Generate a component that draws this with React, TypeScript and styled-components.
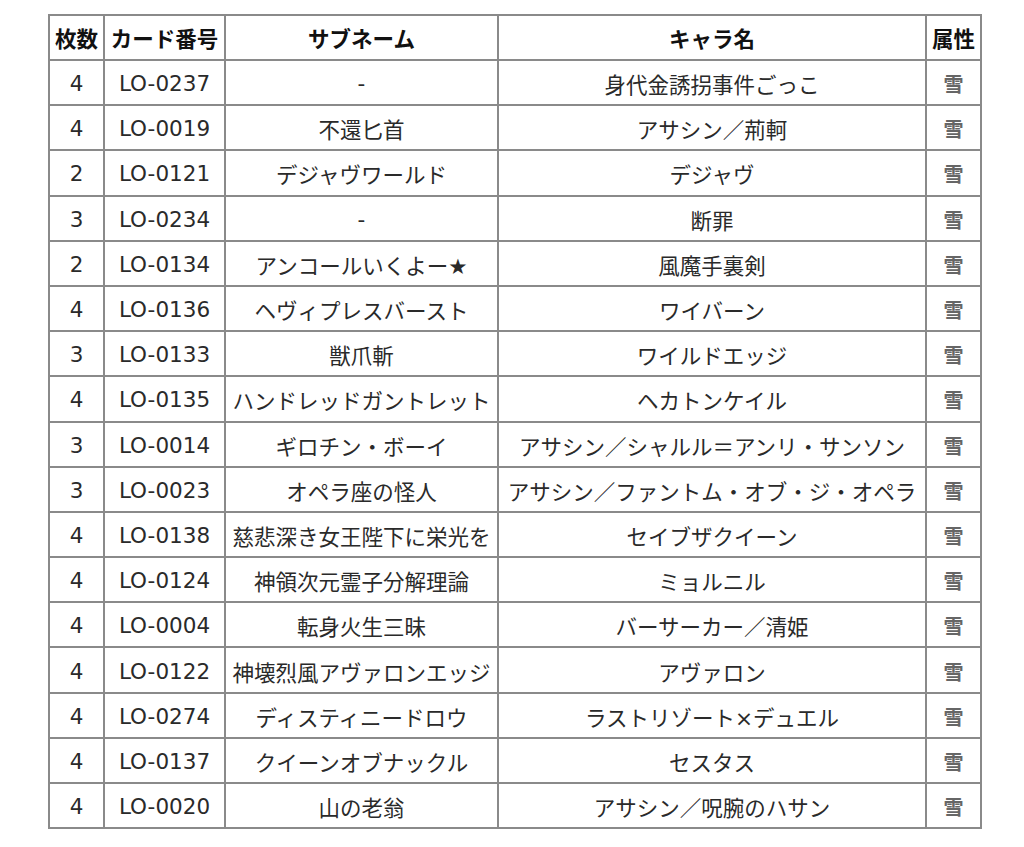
import styled, { createGlobalStyle } from "styled-components";

const GlobalStyle = createGlobalStyle`
	html, body {
		margin: 0;
		padding: 0;
		background: #fff;
	}
`;

const PageWrap = styled.div`
	padding: 14px 0 0 48px;
	font-family: "DejaVu Sans", "Noto Sans CJK JP", sans-serif;
	color: #2a2a2a;
`;

const CardTable = styled.table`
	width: 932px;
	table-layout: fixed;
	border-collapse: collapse;
	border: 2px solid #8a8a8a;
	font-size: 21.5px;
`;

const HeadCell = styled.th`
	height: 43px;
	padding: 0;
	border: 2px solid #8a8a8a;
	font-weight: 700;
	text-align: center;
	white-space: nowrap;
	color: #111;
`;

const Cell = styled.td<{ $attr?: boolean }>`
	height: 41.2px;
	padding: 2px 0 0;
	border: 2px solid #8a8a8a;
	text-align: center;
	white-space: nowrap;
	overflow: hidden;
	color: ${(p) => (p.$attr ? "#666" : "#2a2a2a")};
	font-size: ${(p) => (p.$attr ? "20px" : "inherit")};
	font-weight: ${(p) => (p.$attr ? 700 : 400)};
`;

type Card = {
	count: number;
	no: string;
	sub: string;
	chara: string;
};

const cards: Card[] = [
	{ count: 4, no: "LO-0237", sub: "-", chara: "身代金誘拐事件ごっこ" },
	{ count: 4, no: "LO-0019", sub: "不還匕首", chara: "アサシン／荊軻" },
	{ count: 2, no: "LO-0121", sub: "デジャヴワールド", chara: "デジャヴ" },
	{ count: 3, no: "LO-0234", sub: "-", chara: "断罪" },
	{ count: 2, no: "LO-0134", sub: "アンコールいくよー★", chara: "風魔手裏剣" },
	{ count: 4, no: "LO-0136", sub: "ヘヴィプレスバースト", chara: "ワイバーン" },
	{ count: 3, no: "LO-0133", sub: "獣爪斬", chara: "ワイルドエッジ" },
	{ count: 4, no: "LO-0135", sub: "ハンドレッドガントレット", chara: "ヘカトンケイル" },
	{ count: 3, no: "LO-0014", sub: "ギロチン・ボーイ", chara: "アサシン／シャルル＝アンリ・サンソン" },
	{ count: 3, no: "LO-0023", sub: "オペラ座の怪人", chara: "アサシン／ファントム・オブ・ジ・オペラ" },
	{ count: 4, no: "LO-0138", sub: "慈悲深き女王陛下に栄光を", chara: "セイブザクイーン" },
	{ count: 4, no: "LO-0124", sub: "神領次元霊子分解理論", chara: "ミョルニル" },
	{ count: 4, no: "LO-0004", sub: "転身火生三昧", chara: "バーサーカー／清姫" },
	{ count: 4, no: "LO-0122", sub: "神壊烈風アヴァロンエッジ", chara: "アヴァロン" },
	{ count: 4, no: "LO-0274", sub: "ディスティニードロウ", chara: "ラストリゾート×デュエル" },
	{ count: 4, no: "LO-0137", sub: "クイーンオブナックル", chara: "セスタス" },
	{ count: 4, no: "LO-0020", sub: "山の老翁", chara: "アサシン／呪腕のハサン" },
];

export default function App() {
	return (
		<PageWrap>
			<GlobalStyle />
			<CardTable>
				<colgroup>
					<col style={{ width: 55 }} />
					<col style={{ width: 121 }} />
					<col style={{ width: 273 }} />
					<col style={{ width: 428 }} />
					<col style={{ width: 55 }} />
				</colgroup>
				<thead>
					<tr>
						<HeadCell>枚数</HeadCell>
						<HeadCell>カード番号</HeadCell>
						<HeadCell>サブネーム</HeadCell>
						<HeadCell>キャラ名</HeadCell>
						<HeadCell>属性</HeadCell>
					</tr>
				</thead>
				<tbody>
					{cards.map((c) => (
						<tr key={c.no}>
							<Cell>{c.count}</Cell>
							<Cell>{c.no}</Cell>
							<Cell>{c.sub}</Cell>
							<Cell>{c.chara}</Cell>
							<Cell $attr>雪</Cell>
						</tr>
					))}
				</tbody>
			</CardTable>
		</PageWrap>
	);
}
